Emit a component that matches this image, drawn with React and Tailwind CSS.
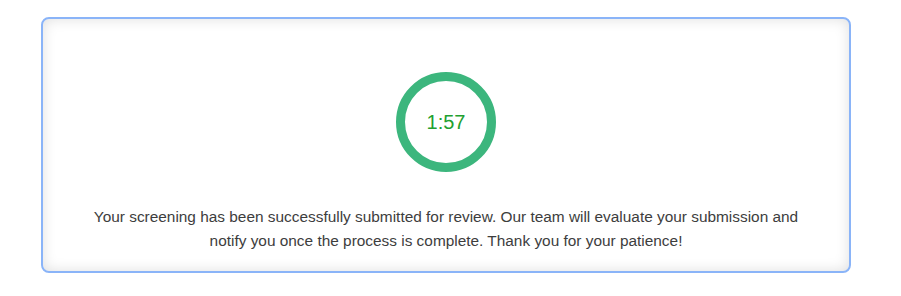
import React from "react";

function Countdown({ time }) {
  return (
    <div className="relative w-[100px] h-[100px] flex items-center justify-center">
      <svg width="100" height="100" viewBox="0 0 100 100" className="absolute inset-0">
        <circle cx="50" cy="50" r="45.5" fill="none" stroke="#3cb67d" strokeWidth="9" />
      </svg>
      <span className="relative text-[20px] text-[#22a030] leading-none">{time}</span>
    </div>
  );
}

export default function App() {
  return (
    <div className="w-[901px] h-[296px] bg-white pt-[17px] pl-[41px] font-['Liberation_Sans',Arial,sans-serif]">
      <div className="w-[810px] h-[256px] border-2 border-[#8ab4f8] rounded-[8px] shadow-[inset_0_0_14px_rgba(0,0,0,0.13)] flex flex-col items-center pt-[53px]">
        <Countdown time="1:57" />
        <p className="mt-[33px] px-[48px] text-center text-[15.4px] leading-[24px] text-[#3d3d3d]">
          Your screening has been successfully submitted for review. Our team will evaluate your submission and notify you once the process is complete. Thank you for your patience!
        </p>
      </div>
    </div>
  );
}
